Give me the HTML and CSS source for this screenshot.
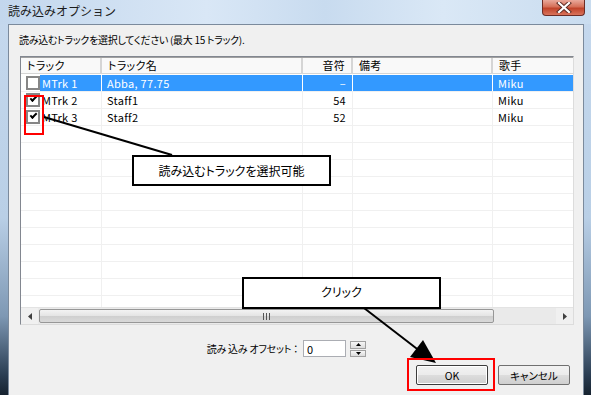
FILE: index.html
```html
<!DOCTYPE html>
<html lang="ja">
<head>
    <meta charset="UTF-8">
    <title>読み込みオプション</title>
    <link rel="stylesheet" href="styles.css">
</head>
<body>
<div class="window">
    <div class="titlebar">
        <span class="title">読み込みオプション</span>
        <span class="close">
            <svg width="16" height="11" viewBox="0 0 16 11">
                <path d="M3 1 L13 10 M13 1 L3 10" stroke="#5a2a22" stroke-width="4" stroke-linecap="square"/>
                <path d="M3 1 L13 10 M13 1 L3 10" stroke="#fff" stroke-width="2.2" stroke-linecap="square"/>
            </svg>
        </span>
    </div>

    <div class="client">
        <p class="prompt">読み込むトラックを選択してください (最大 15 トラック).</p>

        <div class="list">
            <div class="row head">
                <div class="cell">トラック</div>
                <div class="cell">トラック名</div>
                <div class="cell num">音符</div>
                <div class="cell">備考</div>
                <div class="cell">歌手</div>
            </div>
            <div class="body">
                <div class="row selected">
                    <div class="cell track"><span class="check"></span><span class="name">MTrk 1</span></div>
                    <div class="cell">Abba, 77.75</div>
                    <div class="cell num">–</div>
                    <div class="cell"></div>
                    <div class="cell">Miku</div>
                </div>
                <div class="row">
                    <div class="cell track"><span class="check on"></span><span class="name">MTrk 2</span></div>
                    <div class="cell">Staff1</div>
                    <div class="cell num">54</div>
                    <div class="cell"></div>
                    <div class="cell">Miku</div>
                </div>
                <div class="row">
                    <div class="cell track"><span class="check on"></span><span class="name">MTrk 3</span></div>
                    <div class="cell">Staff2</div>
                    <div class="cell num">52</div>
                    <div class="cell"></div>
                    <div class="cell">Miku</div>
                </div>
                <div class="row"><div class="cell"></div><div class="cell"></div><div class="cell"></div><div class="cell"></div><div class="cell"></div></div>
                <div class="row"><div class="cell"></div><div class="cell"></div><div class="cell"></div><div class="cell"></div><div class="cell"></div></div>
                <div class="row"><div class="cell"></div><div class="cell"></div><div class="cell"></div><div class="cell"></div><div class="cell"></div></div>
                <div class="row"><div class="cell"></div><div class="cell"></div><div class="cell"></div><div class="cell"></div><div class="cell"></div></div>
                <div class="row"><div class="cell"></div><div class="cell"></div><div class="cell"></div><div class="cell"></div><div class="cell"></div></div>
                <div class="row"><div class="cell"></div><div class="cell"></div><div class="cell"></div><div class="cell"></div><div class="cell"></div></div>
                <div class="row"><div class="cell"></div><div class="cell"></div><div class="cell"></div><div class="cell"></div><div class="cell"></div></div>
                <div class="row"><div class="cell"></div><div class="cell"></div><div class="cell"></div><div class="cell"></div><div class="cell"></div></div>
                <div class="row"><div class="cell"></div><div class="cell"></div><div class="cell"></div><div class="cell"></div><div class="cell"></div></div>
                <div class="row"><div class="cell"></div><div class="cell"></div><div class="cell"></div><div class="cell"></div><div class="cell"></div></div>
                <div class="row"><div class="cell"></div><div class="cell"></div><div class="cell"></div><div class="cell"></div><div class="cell"></div></div>
            </div>
            <div class="hscroll">
                <span class="arrow">
                    <svg width="4" height="7" viewBox="0 0 4 7"><path d="M4 0 L0 3.5 L4 7 Z" fill="#404040"/></svg>
                </span>
                <div class="track-bar">
                    <div class="thumb"><span class="grip"></span></div>
                </div>
                <span class="arrow">
                    <svg width="4" height="7" viewBox="0 0 4 7"><path d="M0 0 L4 3.5 L0 7 Z" fill="#404040"/></svg>
                </span>
            </div>
        </div>

        <div class="offset">
            <label for="offset">読み 込み オフセット ：</label>
            <input id="offset" type="text" value="0">
            <div class="spin">
                <span class="spin-btn"><svg width="5" height="3" viewBox="0 0 5 3"><path d="M0 3 L2.5 0 L5 3 Z" fill="#000"/></svg></span>
                <span class="spin-btn"><svg width="5" height="3" viewBox="0 0 5 3"><path d="M0 0 L2.5 3 L5 0 Z" fill="#000"/></svg></span>
            </div>
        </div>

        <div class="buttons">
            <button class="btn ok">OK</button>
            <button class="btn">キャンセル</button>
        </div>
    </div>

    <!-- annotations drawn over the dialog -->
    <svg class="lines" width="591" height="395" viewBox="0 0 591 395">
        <line x1="44" y1="117" x2="172" y2="155" stroke="#000" stroke-width="2"/>
        <line x1="364" y1="308" x2="425" y2="355" stroke="#000" stroke-width="2"/>
        <polygon points="436,363 410,357 423,340" fill="#000"/>
    </svg>
    <div class="redbox check-mark"></div>
    <div class="redbox ok-mark"></div>
    <div class="callout select-note">読み込むトラックを選択可能</div>
    <div class="callout click-note">クリック</div>
</div>
</body>
</html>
```

FILE: styles.css
```css
body {
    margin: 0;
    font-family: "Noto Sans CJK JP", "Liberation Sans", sans-serif;
    font-size: 11px;
    font-feature-settings: "palt";
    color: #000;
}
.window {
    position: relative;
    width: 591px;
    height: 395px;
    overflow: hidden;
    display: flex;
    flex-direction: column;
    padding: 0 7px 0 8px;
    box-sizing: border-box;
    background: linear-gradient(to bottom, #c6d9ee 0%, #b9cfe6 55%, #7e98b4 80%, #2a3d52 95%, #16222f 100%);
}
.titlebar {
    height: 24px;
    margin: 0 -7px 0 -8px;
    padding: 0 6px 0 8px;
    display: flex;
    justify-content: space-between;
    align-items: flex-start;
    background: linear-gradient(to right, #c3d7ed 0%, #d9e7f6 35%, #c8dbef 55%, #dae8f6 75%, #c9dcef 100%);
}
.title {
    font-size: 12px;
    font-feature-settings: normal;
    line-height: 21px;
    color: #1b1b1b;
}
.close {
    width: 43px;
    height: 16px;
    display: flex;
    align-items: center;
    justify-content: center;
    border: 1px solid #6c2c25;
    border-top: none;
    border-radius: 0 0 4px 4px;
    box-sizing: border-box;
    background: linear-gradient(to bottom, #e9a99b 0%, #d56f58 45%, #c0432a 55%, #d9735b 100%);
}
.client {
    flex: 1;
    background: #f0f0f0;
    border: 1px solid #7b8a9c;
    border-bottom: none;
    display: flex;
    flex-direction: column;
}
.prompt {
    margin: 7px 0 0 10px;
    height: 16px;
    line-height: 16px;
    font-size: 10px;
    letter-spacing: -0.3px;
}

/* list view */
.list {
    margin: 8px 0 0 11px;
    width: 554px;
    height: 269px;
    border: 1px solid #828790;
    border-right-color: #dcdcdc;
    border-bottom-color: #dcdcdc;
    box-sizing: border-box;
    background: #fff;
    display: flex;
    flex-direction: column;
}
.row {
    display: grid;
    grid-template-columns: 81px 201px 50px 140px 80px;
    height: 17px;
    border-bottom: 1px solid #f0f0f0;
    box-sizing: border-box;
}
.row .cell {
    border-right: 1px solid #f0f0f0;
    padding-left: 5px;
    line-height: 16px;
    white-space: nowrap;
    overflow: hidden;
    letter-spacing: 0.3px;
}
.row .cell:last-child {
    border-right: none;
}
.row .num {
    text-align: right;
    padding: 0 6px 0 0;
}
.head {
    background: #f9f9f9;
    border-top: 1px solid #a0a0a0;
    border-bottom: 1px solid #d5d5d5;
}
.head .cell {
    border-right: 2px solid #d5d5d5;
    padding-left: 6px;
    line-height: 15px;
}
.head .num {
    padding-right: 6px;
}
.body {
    height: 234px;
    overflow: hidden;
    padding-top: 1px;
    box-sizing: border-box;
}
.selected .cell {
    background: #3399ff;
    color: #fff;
    border-right-color: #fff;
}
.row .track {
    display: flex;
    align-items: center;
    padding: 0;
    background: none;
}
.check {
    flex: none;
    width: 14px;
    height: 14px;
    margin: 0 0 0 5px;
    border: 2px solid #868686;
    box-sizing: border-box;
    background: #fff;
    position: relative;
}
.check.on::after {
    content: "";
    position: absolute;
    left: 2px;
    top: 1px;
    width: 5px;
    height: 2px;
    border-left: 2px solid #000;
    border-bottom: 2px solid #000;
    transform: rotate(-45deg);
}
.track .name {
    flex: 1;
    height: 16px;
    padding-left: 2px;
}
.selected .track .name {
    background: #3399ff;
}
.hscroll {
    height: 16px;
    display: flex;
    background: #f0f0f0;
    border-top: 1px solid #e3e3e3;
}
.arrow {
    width: 17px;
    display: flex;
    align-items: center;
    justify-content: center;
}
.track-bar {
    flex: 1;
    display: flex;
    padding: 1px 62px 1px 1px;
    background: #eaeaea;
}
.thumb {
    flex: 1;
    border: 1px solid #979797;
    border-radius: 2px;
    background: linear-gradient(to bottom, #f3f3f3 0%, #e4e4e4 50%, #cfcfcf 51%, #d9d9d9 100%);
    display: flex;
    align-items: center;
    justify-content: center;
}
.grip {
    width: 7px;
    height: 7px;
    background: repeating-linear-gradient(to right, #555 0 1px, transparent 1px 3px);
}

/* offset row */
.offset {
    margin: 15px 0 0 0;
    display: flex;
    align-items: center;
    height: 17px;
}
.offset label {
    width: 289px;
    text-align: right;
    font-size: 10px;
    letter-spacing: -0.2px;
}
.offset input {
    margin-left: 5px;
    width: 43px;
    height: 17px;
    box-sizing: border-box;
    border: 1px solid #abadb3;
    padding: 0 3px;
    font: inherit;
    background: #fff;
}
.spin {
    margin-left: 4px;
    display: flex;
    flex-direction: column;
    gap: 1px;
}
.spin-btn {
    width: 16px;
    height: 7px;
    border: 1px solid #a0a0a0;
    box-sizing: border-box;
    background: linear-gradient(#f6f6f6, #dcdcdc);
    display: flex;
    align-items: center;
    justify-content: center;
}
.spin-btn:first-child {
    height: 8px;
}

/* dialog buttons */
.buttons {
    margin-top: 8px;
    display: flex;
    justify-content: flex-end;
    gap: 10px;
    padding-right: 13px;
}
.btn {
    width: 72px;
    height: 20px;
    font: inherit;
    font-size: 10.5px;
    border: 1px solid #707070;
    border-radius: 2px;
    background: linear-gradient(to bottom, #f2f2f2 0%, #ebebeb 50%, #dddddd 51%, #cfcfcf 100%);
    padding: 0;
}
.btn.ok {
    border-color: #3c3c3c;
    box-shadow: inset 0 0 0 1px #fff;
}

/* annotations */
.lines {
    position: absolute;
    left: 0;
    top: 0;
}
.redbox {
    position: absolute;
    border: 2px solid #ff0000;
}
.check-mark {
    left: 24px;
    top: 95px;
    width: 16px;
    height: 36px;
}
.ok-mark {
    left: 407px;
    top: 358px;
    width: 84px;
    height: 29px;
}
.callout {
    position: absolute;
    background: #fff;
    border: 2px solid #000;
    box-sizing: border-box;
    display: flex;
    align-items: center;
    justify-content: center;
    font-size: 12px;
}
.select-note {
    left: 132px;
    top: 155px;
    width: 199px;
    height: 31px;
}
.click-note {
    left: 242px;
    top: 277px;
    width: 199px;
    height: 32px;
    padding-bottom: 4px;
}
```
